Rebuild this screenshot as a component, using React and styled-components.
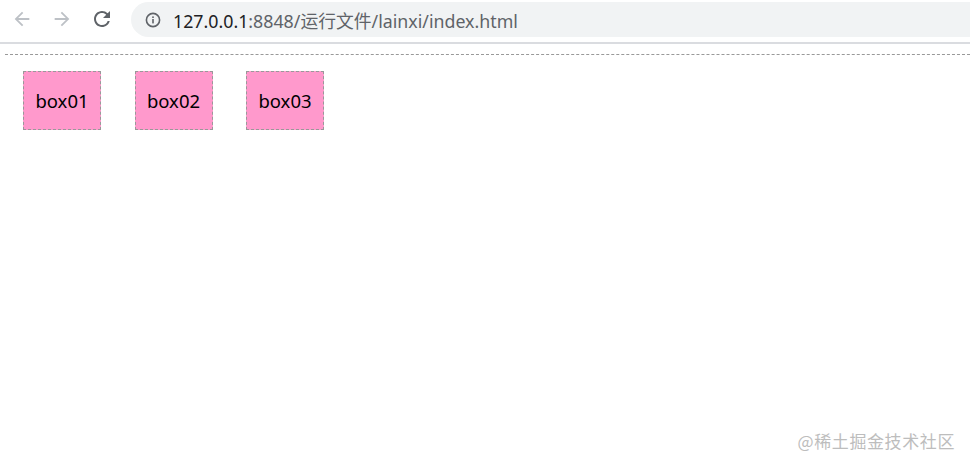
import React from "react";
import styled, { createGlobalStyle } from "styled-components";

const Global = createGlobalStyle`
  html, body { margin: 0; padding: 0; background: #fff; }
  body { font-family: "Noto Sans", "Noto Sans CJK SC", sans-serif; }
`;

const Page = styled.div`
  width: 970px;
  height: 469px;
  position: relative;
  overflow: hidden;
  display: flex;
  flex-direction: column;
`;

const Toolbar = styled.div`
  height: 42px;
  display: flex;
  align-items: flex-start;
  border-bottom: 2px solid #dadce0;
  box-sizing: content-box;
`;

const NavButton = styled.div`
  width: 40px;
  height: 38px;
  display: flex;
  align-items: center;
  justify-content: center;
  color: ${(p) => (p.$disabled ? "#bdc1c6" : "#5f6368")};
  margin-left: ${(p) => p.$ml || 0}px;
`;

const Omnibox = styled.div`
  margin-left: ${(p) => p.$ml}px;
  margin-top: 2px;
  flex: 1;
  height: 35px;
  background: #f1f3f4;
  border-radius: 18px 0 0 18px;
  display: flex;
  align-items: center;
  padding-left: 14px;
`;

const Url = styled.span`
  margin-left: 12px;
  font-size: 17.8px;
  color: #5f6368;
`;

const Host = styled.span`
  color: #202124;
`;

const Content = styled.div`
  padding: 10px 0 0 5px;
`;

const DashedRule = styled.div`
  border-top: 1px dashed #999;
  height: 0;
`;

const BoxRow = styled.div`
  display: flex;
  gap: 33.5px;
  margin-top: 16px;
  padding-left: 18px;
`;

const Box = styled.div`
  width: 76px;
  height: 57px;
  background: #ff99cc;
  border: 1px dashed #999;
  display: flex;
  align-items: center;
  justify-content: center;
  font-size: 18.5px;
  color: #000;
`;

const Watermark = styled.div`
  position: absolute;
  right: 15px;
  bottom: 16px;
  font-size: 17px;
  letter-spacing: 0.6px;
  color: #bdbdbd;
  font-family: "Noto Sans CJK SC", sans-serif;
`;

const Back = () => (
  <svg width="22" height="22" viewBox="0 0 24 24" fill="currentColor">
    <path d="M20 11H7.83l5.59-5.59L12 4l-8 8 8 8 1.41-1.41L7.83 13H20v-2z" />
  </svg>
);
const Forward = () => (
  <svg width="22" height="22" viewBox="0 0 24 24" fill="currentColor">
    <path d="M12 4l-1.41 1.41L16.17 11H4v2h12.17l-5.58 5.59L12 20l8-8z" />
  </svg>
);
const Reload = () => (
  <svg width="24" height="24" viewBox="0 0 24 24" fill="currentColor">
    <path d="M17.65 6.35A7.958 7.958 0 0 0 12 4c-4.42 0-7.99 3.58-7.99 8s3.57 8 7.99 8c3.73 0 6.84-2.55 7.730-6h-2.08A5.99 5.99 0 0 1 12 18c-3.31 0-6-2.69-6-6s2.69-6 6-6c1.66 0 3.14.69 4.22 1.78L13 11h7V4l-2.35 2.35z" />
  </svg>
);
const Info = () => (
  <svg width="16" height="16" viewBox="0 0 16 16">
    <circle cx="8" cy="8" r="6.6" fill="none" stroke="#5f6368" strokeWidth="1.6" />
    <rect x="7.2" y="7" width="1.6" height="4.4" fill="#5f6368" />
    <rect x="7.2" y="4.4" width="1.6" height="1.6" fill="#5f6368" />
  </svg>
);

export default function App() {
  return (
    <Page>
      <Global />
      <Toolbar>
        <NavButton $disabled $ml={2}><Back /></NavButton>
        <NavButton $disabled><Forward /></NavButton>
        <NavButton><Reload /></NavButton>
        <Omnibox $ml={9}>
          <Info />
          <Url>
            <Host>127.0.0.1</Host>:8848/运行文件/lainxi/index.html
          </Url>
        </Omnibox>
      </Toolbar>
      <Content>
        <DashedRule />
        <BoxRow>
          <Box>box01</Box>
          <Box>box02</Box>
          <Box>box03</Box>
        </BoxRow>
      </Content>
      <Watermark>@稀土掘金技术社区</Watermark>
    </Page>
  );
}
